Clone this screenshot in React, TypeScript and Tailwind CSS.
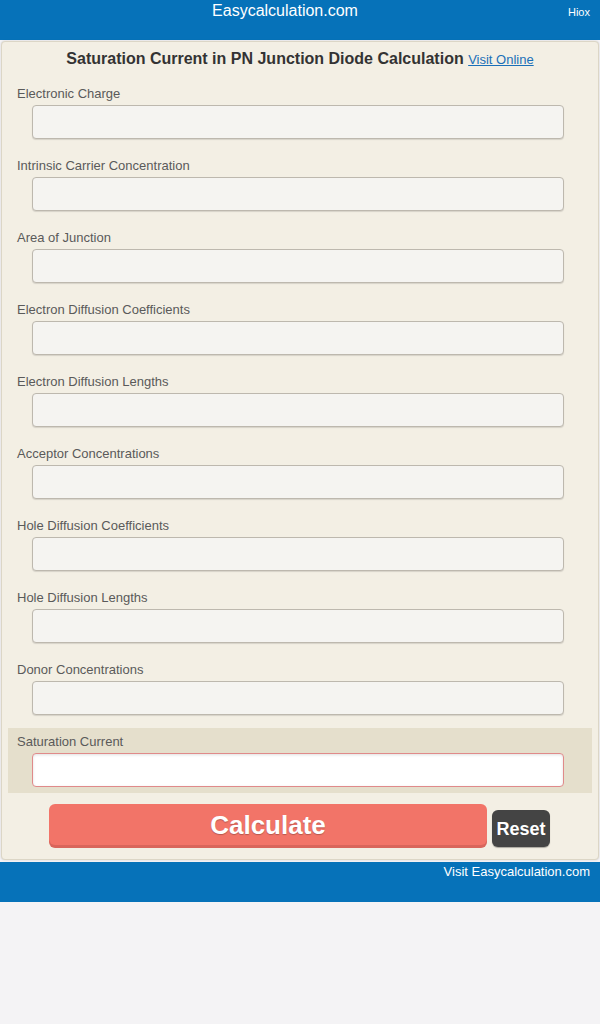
const fields = [
  'Electronic Charge',
  'Intrinsic Carrier Concentration',
  'Area of Junction',
  'Electron Diffusion Coefficients',
  'Electron Diffusion Lengths',
  'Acceptor Concentrations',
  'Hole Diffusion Coefficients',
  'Hole Diffusion Lengths',
  'Donor Concentrations',
];

export default function App() {
  return (
    <div className="min-h-[1024px] bg-[#f4f3f5] font-['Liberation_Sans',Arial,sans-serif]">
      {/* header */}
      <div className="h-[40px] bg-[#0672b9] flex items-start">
        <div className="flex-1 text-center text-white text-[16px] leading-[20px] pt-[1px] pl-[30px]">Easycalculation.com</div>
        <div className="w-[60px] pr-[10px] text-right pt-[4px] text-white text-[11px]">Hiox</div>
      </div>

      {/* card */}
      <div className="mx-[1px] mt-[1px] bg-[#f3efe4] border border-[#dcd6c6] rounded-[4px] shadow-[0_0_2px_rgba(0,0,0,0.15)] px-[6px] pb-[12px]">
        <div className="pt-[5px] h-[38px] text-center">
          <span className="text-[16px] font-bold text-[#333] leading-[20px]">Saturation Current in PN Junction Diode Calculation</span>{' '}
          <a href="#" className="text-[13px] text-[#1a6fb8] underline">Visit Online</a>
        </div>

        {fields.map((f) => (
          <div key={f} className="pt-[6px] pb-[13px]">
            <div className="pl-[9px] text-[13px] leading-[16px] text-[#5a5a5a]">{f}</div>
            <input
              className="block mt-[3px] ml-[24px] w-[532px] h-[34px] bg-[#f5f4f1] border border-[#bdb8ae] rounded-[4px] shadow-[0_1px_1px_rgba(0,0,0,0.12)] outline-none"
            />
          </div>
        ))}

        <div className="bg-[#e5dfcc] pt-[6px] pb-[6px]">
          <div className="pl-[9px] text-[13px] leading-[16px] text-[#5a5a5a]">Saturation Current</div>
          <input className="block mt-[3px] ml-[24px] w-[532px] h-[34px] bg-white border border-[#e08a8a] rounded-[4px] shadow-[inset_0_1px_3px_rgba(0,0,0,0.12)] outline-none" />
        </div>

        <div className="flex items-start mt-[11px] pl-[41px]">
          <button className="w-[438px] h-[41px] bg-[#f27468] rounded-[6px] shadow-[0_3px_0_#d9655b] text-white font-bold text-[26px] leading-[40px] [text-shadow:0_1px_1px_rgba(0,0,0,0.25)]">
            Calculate
          </button>
          <button className="ml-[5px] mt-[6px] w-[58px] h-[37px] bg-[#444] rounded-[6px] text-white font-bold text-[18px] leading-[34px] shadow-[0_1px_1px_rgba(0,0,0,0.3)]">
            Reset
          </button>
        </div>
      </div>

      {/* footer */}
      <div className="mt-[2px] h-[40px] bg-[#0672b9] text-right pr-[10px] text-white text-[13px] leading-[18px] pt-[1px]">
        Visit Easycalculation.com
      </div>
    </div>
  );
}
